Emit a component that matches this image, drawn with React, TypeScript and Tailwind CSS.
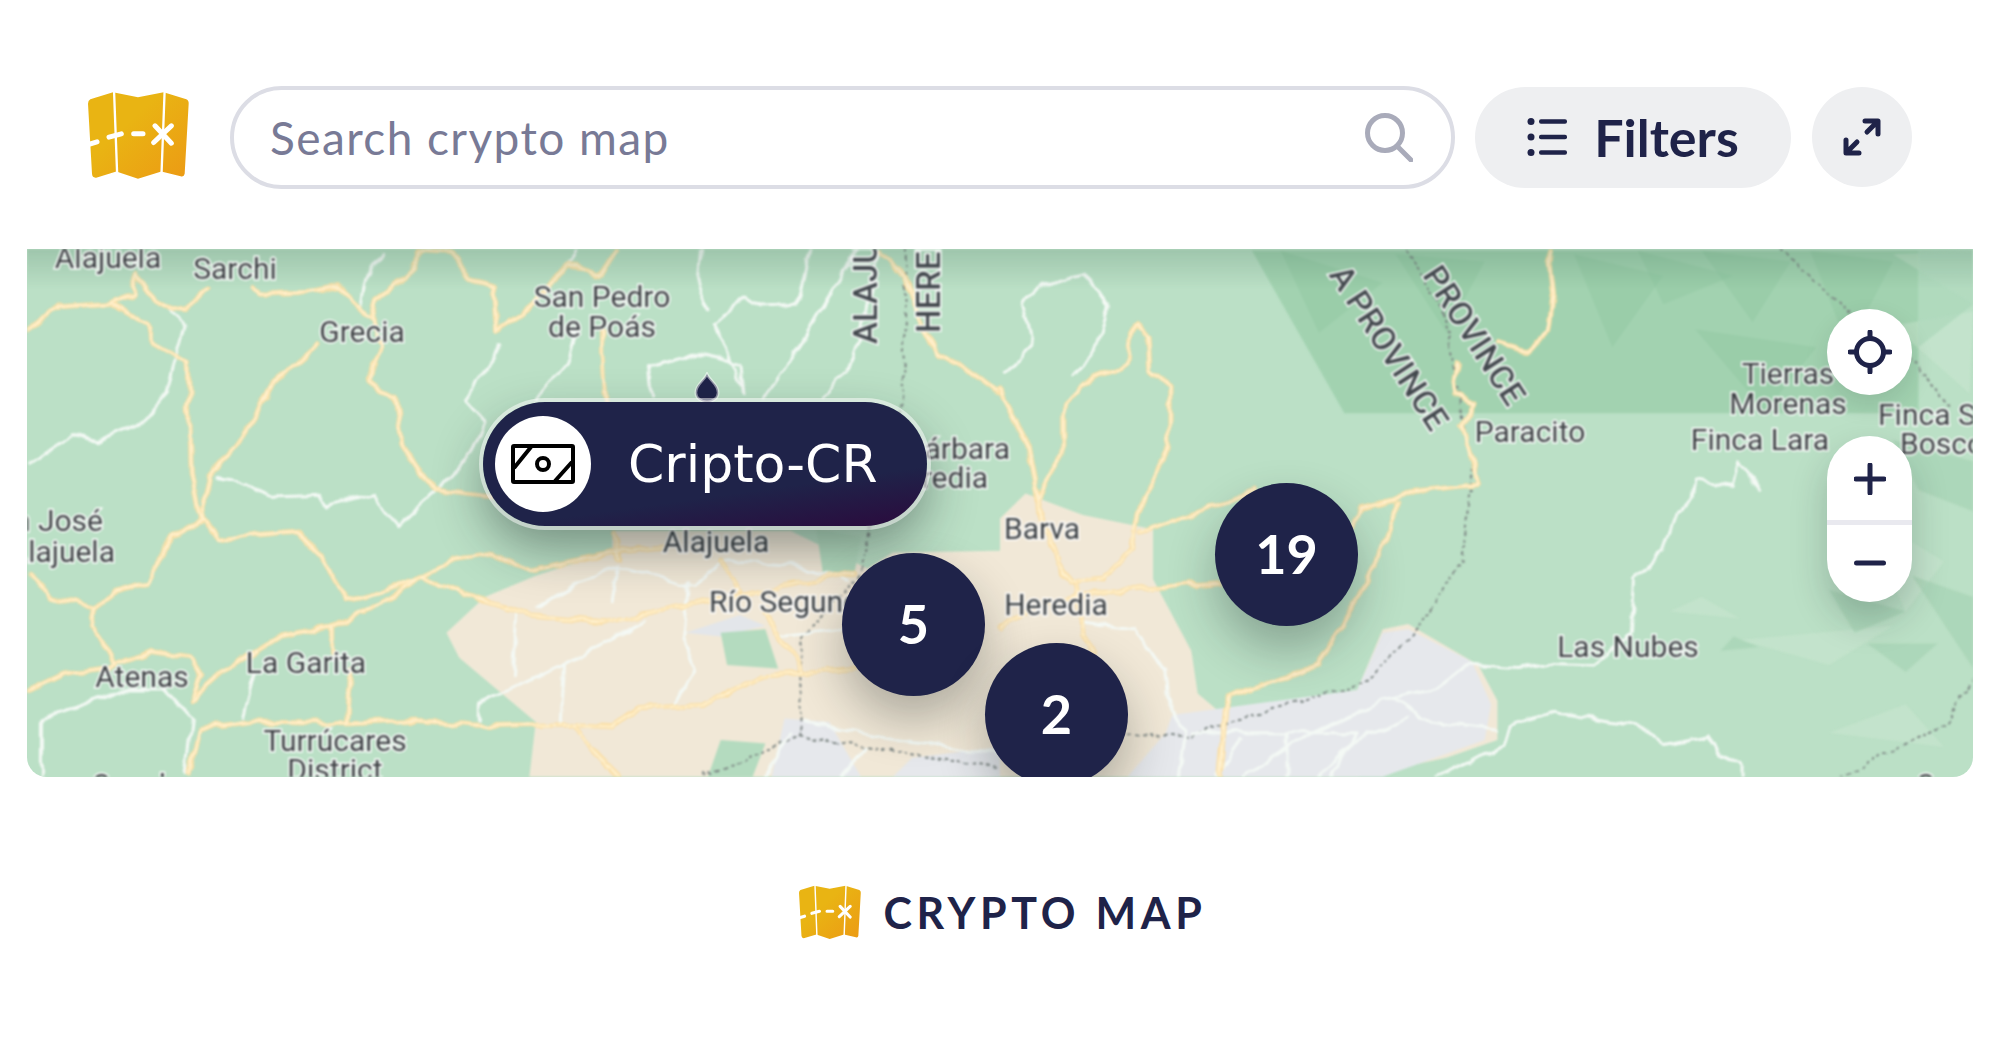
const navy = '#1f2349';

const leftYellow = [
  'M42,255 L90,185 L170,175 L230,240 L240,290 L295,345 L300,650 L315,790 L345,840 L410,825 L465,815 L500,880 L545,1010 L600,985 L660,945',
  'M170,175 L210,150 L210,90 L245,175 L290,195 L325,135',
  'M400,125 L410,155 L465,150 L530,130 L580,215 L600,300 L575,400 L620,440 L630,570 L660,650 L680,700 L770,720',
  'M500,290 L430,400 L400,490 L370,570 L330,660 L315,790 L270,830 L230,960 L180,990 L150,1030 L80,1000 L50,930',
  'M150,1030 L145,1080 L180,1190 L240,1155 L300,1170 L315,1220 L300,1290',
  'M42,1265 L100,1215 L180,1195',
  'M300,1290 L350,1210 L440,1110 L520,1080 L600,1020 L660,945 L710,895 L770,880 L830,925 L960,875 L1040,860',
  'M660,945 L760,1010 L830,1050 L950,1070 L1100,1015 L1340,930',
  'M295,1500 L315,1370 L400,1350 L550,1355 L650,1345 L760,1360 L900,1355 L960,1360 L1000,1310 L1100,1300 L1200,1220 L1340,1200',
  'M900,1355 L930,1430 L970,1500',
  'M545,1355 L550,1200',
  'M520,1085 L520,1150',
  'M660,30 L640,100 L590,170 L580,215',
  'M660,30 L710,35 L735,110 L775,130 L780,250 L830,190 L890,60 L940,100 L965,30',
  'M945,240 L945,320 L950,450',
  'M1380,30 L1420,100 L1450,250 L1470,320 L1530,380 L1568,430',
  'M1200,1040 L1215,1100 L1240,1160 L1260,1210',
  'M965,815 L970,890',
  'M1130,900 L1160,980',
];

const leftWhite = [
  'M600,40 L575,100 L565,190',
  'M900,30 L880,80',
  'M342,665 L385,680 L430,720 L500,715 L510,745 L585,710 L625,800 L680,705 L740,600 L760,510 L730,450 L770,350 L780,290',
  'M45,625 L115,545 L150,565 L220,515 L260,430 L290,240 L260,185',
  'M1020,440 L1015,360 L1100,315 L1160,350 L1165,430 L1120,230 L1170,160 L1190,185 L1250,180 L1270,30',
  'M1100,30 L1095,150 L1110,195',
  'M840,450 L890,330 L900,260',
  'M1200,440 L1260,280 L1340,30',
  'M1290,440 L1340,330 L1380,30',
  'M840,1030 L960,910 L1090,970 L1130,900 L1240,910 L1330,950',
  'M970,910 L960,1010 M1080,960 L1070,1110 L1090,1200 L1060,1300',
  'M880,1190 L750,1300 L750,1345 M880,1190 L1010,1070 M885,1190 L880,1350',
  'M810,1050 L805,1220',
  'M1225,1110 L1340,1090',
  'M1260,1350 L1400,1400 L1568,1440',
  'M1240,1380 L1200,1503 M1360,1420 L1320,1503',
  'M65,1500 L65,1340 L130,1300 L190,1260 L260,1260 L300,1340 L290,1500',
  'M380,1340 L400,1200',
];

const rightYellow = [
  'M860,30 L868,150 L860,260 L830,310 L780,290',
  'M720,345 L710,430 L745,460 L725,520 L750,685 L640,705 L600,740 L565,755 L555,800',
  'M625,735 L590,900 L500,1190 L355,1280 L345,1503',
  'M60,720 L100,600 L100,480 L130,400 L200,350 L205,260 L215,240 L232,270 L235,365 L265,410 L265,580 L215,770 L205,860 L160,950 L110,960 L90,900 L60,740 L40,560 L0,420',
  'M220,815 L300,770 L400,700',
  'M0,1080 L50,1030 L120,1000 L230,975 L345,960',
  'M120,960 L130,1100 L145,1150',
];

const rightWhite = [
  'M1190,700 L1160,620 L1150,690 L1090,675 L1085,720 L1060,770 L1040,870 L995,950 L990,1100 L930,1190 L860,1185 L810,1200 L730,1190 L680,1260 L600,1290 L480,1390 L380,1503',
  'M800,1360 L870,1320 L1000,1360 L1040,1410 L1110,1385 L1130,1440 L1165,1470 L1165,1503',
  'M800,1360 L790,1420 L680,1503',
  'M10,370 L50,300 L35,175 L70,125 L135,95 L170,185 L150,310 L115,380',
  'M130,1070 L210,1090 L240,1170 L260,1200 L265,1300 L290,1370 L280,1503',
  'M620,1290 L660,1340 L780,1370',
  'M300,1380 L560,1380 L520,1503 M450,1380 L450,1503 M380,1400 L340,1503',
  'M640,1340 L560,1400 L500,1503',
];

const rightDots = [
  'M640,30 L700,220 L740,640 L725,900 L640,1120 L570,1240 L300,1385 L200,1388',
  'M1225,30 L1330,200 L1430,340 L1490,470',
  'M1526,1230 L1480,1360 L1320,1500',
];

const leftDots = [
  'M1422,30 L1415,440 L1360,830 L1350,930 L1255,1120 L1255,1390 L1100,1503',
  'M1255,1390 L1568,1480',
];

const parkFacets = [
  'M440,30 L500,260 L600,120 Z',
  'M620,40 L700,260 L760,60 Z',
  'M900,40 L960,300 L1040,100 Z',
  'M1000,30 L1040,180 L1150,100 Z',
  'M1100,30 L1180,230 L1240,60 Z',
  'M1270,30 L1330,300 L1400,60 Z',
  'M1090,250 L1200,480 L1280,300 Z',
];

const lightFacets = [
  'M1400,240 L1520,430 L1526,200 Z',
  'M1400,40 L1526,180 L1526,30 Z',
  'M1160,1120 L1300,1190 L1400,1080 Z',
  'M1350,760 L1420,1040 L1480,900 Z',
  'M1050,1040 L1160,1060 L1100,1000 Z',
  'M1300,1380 L1420,1300 L1480,1420 Z',
];

const darkFacets = [
  'M1300,980 L1340,1100 L1420,1040 Z',
  'M1430,940 L1526,1200 L1526,1000 Z',
  'M1150,1110 L1190,1140 L1130,1150 Z',
  'M1360,1130 L1420,1210 L1470,1130 Z',
  'M1400,560 L1526,620 L1526,760 L1440,700 Z',
];

const labels = [
  { text: 'Alajuela', x: 108, y: 268 },
  { text: 'Sarchi', x: 235, y: 279 },
  { text: 'Grecia', x: 362, y: 342 },
  { text: 'San Pedro', x: 602, y: 307 },
  { text: 'de Poás', x: 602, y: 337 },
  { text: 'Santa Bárbara', x: 1010, y: 459, anchor: 'end' },
  { text: 'de Heredia', x: 988, y: 488, anchor: 'end' },
  { text: 'San José', x: 103, y: 531, anchor: 'end' },
  { text: 'de Alajuela', x: 115, y: 562, anchor: 'end' },
  { text: 'Alajuela', x: 716, y: 552 },
  { text: 'Río Segundo', x: 709, y: 612, anchor: 'start' },
  { text: 'Barva', x: 1042, y: 539 },
  { text: 'Heredia', x: 1056, y: 615 },
  { text: 'La Garita', x: 306, y: 673 },
  { text: 'Atenas', x: 142, y: 687 },
  { text: 'Turrúcares', x: 335, y: 751 },
  { text: 'District', x: 335, y: 780 },
  { text: 'Coyolar', x: 142, y: 795 },
  { text: 'Paracito', x: 1530, y: 442 },
  { text: 'Tierras', x: 1788, y: 384 },
  { text: 'Morenas', x: 1788, y: 414 },
  { text: 'Finca Lara', x: 1760, y: 450 },
  { text: 'Finca San', x: 1878, y: 425, anchor: 'start' },
  { text: 'Bosco', x: 1900, y: 454, anchor: 'start' },
  { text: 'Las Nubes', x: 1628, y: 657 },
  { text: 'San', x: 1942, y: 795 },
];

const regionLabels = [
  { text: 'ALAJUELA', transform: 'translate(877 344) rotate(-90)', anchor: 'start' },
  { text: 'HEREDIA', transform: 'translate(940 333) rotate(-90)', anchor: 'start' },
  { text: 'A PROVINCE', transform: 'translate(1431 433) rotate(57)', anchor: 'end' },
  { text: 'PROVINCE', transform: 'translate(1508 408) rotate(57)', anchor: 'end' },
];

const clusters = [
  { count: '5', pos: 'left-[815px] top-[304px]' },
  { count: '19', pos: 'left-[1188px] top-[234px]' },
  { count: '2', pos: 'left-[958px] top-[394px]' },
];

const Lines = ({ paths, className }: { paths: string[]; className: string }) => (
  <g className={className} fill="none" strokeLinejoin="round" strokeLinecap="round">
    {paths.map((d, i) => (
      <path key={i} d={d} vectorEffect="non-scaling-stroke" />
    ))}
  </g>
);

const Roads = ({ yellow, white, dots }: { yellow: string[]; white: string[]; dots: string[] }) => (
  <>
    <Lines paths={dots} className="stroke-[#7c8583] [stroke-width:2px] [stroke-dasharray:2_5]" />
    <Lines paths={white} className="stroke-[#f4f9f5] [stroke-width:3px]" />
    <Lines paths={yellow} className="stroke-[#fbdfa6] [stroke-width:5px]" />
    <Lines paths={yellow} className="stroke-[#fff1cf] [stroke-width:2px]" />
  </>
);

const MapLogo = ({ className, id }: { className: string; id: string }) => (
  <svg viewBox="55 62 303 263" className={className}>
    <defs>
      <linearGradient id={id} x1="0.35" y1="0.4" x2="1" y2="1">
        <stop offset="0" stopColor="#e9b413" />
        <stop offset="1" stopColor="#ec9a14" />
      </linearGradient>
    </defs>
    <path
      d="M62,86 L130,65 L205,80 L282,65 L350,86 Q358,90 357,100 L345,310 Q343,320 333,317 L275,303 L205,325 L140,303 L82,321 Q68,324 67,310 L55,100 Q55,90 62,86 Z"
      fill={`url(#${id})`}
    />
    <g stroke="#fff" fill="none" strokeLinecap="round">
      <path d="M133,58 L143,325 M285,58 L275,325" strokeWidth="7" strokeLinecap="butt" />
      <path d="M50,224 L82,214 M118,200 L155,190 M192,190 L220,190 M252,216 L305,166 M256,166 L305,218" strokeWidth="15" />
    </g>
  </svg>
);

const MapBackground = () => (
  <svg viewBox="27 249 1946 528" className="absolute inset-0 w-full h-full blur-[0.9px]">
    <defs>
      <linearGradient id="topShade" x1="0" y1="0" x2="0" y2="1">
        <stop offset="0" stopColor="#2f5d48" stopOpacity="0.2" />
        <stop offset="1" stopColor="#2f5d48" stopOpacity="0" />
      </linearGradient>
      <filter id="wobble" x="-2%" y="-2%" width="104%" height="104%">
        <feTurbulence type="fractalNoise" baseFrequency="0.045" numOctaves="2" seed="4" />
        <feDisplacementMap in="SourceGraphic" scale="11" xChannelSelector="R" yChannelSelector="G" />
      </filter>
    </defs>
    <g transform="translate(1000,240) scale(0.6378,0.3571)">
      <path d="M395,30 L1440,30 L1440,485 L540,485 Z" fill="#a2d2b0" />
      {parkFacets.map((d, i) => (
        <path key={i} d={d} fill="#8fc6a0" opacity="0.4" />
      ))}
      {lightFacets.map((d, i) => (
        <path key={i} d={d} fill="#cfe9d5" opacity="0.4" />
      ))}
      {darkFacets.map((d, i) => (
        <path key={i} d={d} fill="#9ccdaa" opacity="0.45" />
      ))}
      <path d="M1440,30 L1526,30 L1526,180 L1440,300 Z" fill="#a9d6b7" opacity="0.6" />
    </g>
    <g transform="translate(0,240) scale(0.6378,0.3571)">
      <path d="M700,1100 L760,1000 L840,940 L960,870 L960,815 L1240,815 L1360,920 L1400,875 L1568,870 L1568,1503 L830,1503 L840,1350 L720,1170 Z" fill="#f1e8d7" />
      <path d="M1230,1340 L1300,1350 L1350,1503 L1210,1503 Z" fill="#e6e8ec" />
      <path d="M1430,1450 L1568,1420 L1568,1503 L1400,1503 Z" fill="#e6e8ec" />
      <path d="M1075,1100 L1160,1050 L1200,1080 L1130,1110 Z" fill="#e3e6ea" />
      <path d="M1130,1100 L1200,1090 L1220,1200 L1140,1190 Z" fill="#b4dbbf" />
      <path d="M1280,810 L1350,830 L1340,930 L1290,930 Z" fill="#b4dbbf" />
      <path d="M1130,1400 L1200,1410 L1180,1503 L1110,1503 Z" fill="#b4dbbf" />
    </g>
    <g transform="translate(1000,240) scale(0.6378,0.3571)">
      <path d="M0,780 L40,710 L130,770 L240,810 L240,950 L300,1150 L310,1270 L350,1330 L560,1260 L600,1090 L640,1075 L750,1190 L780,1290 L780,1400 L700,1450 L560,1503 L0,1503 Z" fill="#f1e8d7" />
      <path d="M270,1330 L560,1260 L600,1100 L640,1090 L740,1180 L770,1300 L760,1400 L600,1503 L200,1503 L260,1380 Z" fill="#e6e8ec" />
    </g>
    <g filter="url(#wobble)">
      <g transform="translate(0,240) scale(0.6378,0.3571)">
        <Roads yellow={leftYellow} white={leftWhite} dots={leftDots} />
      </g>
      <g transform="translate(1000,240) scale(0.6378,0.3571)">
        <Roads yellow={rightYellow} white={rightWhite} dots={rightDots} />
      </g>
    </g>
    <rect x="27" y="249" width="1946" height="40" fill="url(#topShade)" />
    <g className="fill-[#3c4043] stroke-[#ffffff] [stroke-width:3px] [paint-order:stroke]" fontFamily="Roboto, sans-serif" fontSize="30">
      {labels.map((l, i) => (
        <text key={i} x={l.x} y={l.y} textAnchor={(l.anchor ?? 'middle') as 'middle' | 'start' | 'end'}>
          {l.text}
        </text>
      ))}
    </g>
    <g className="fill-[#43494e] stroke-[#ffffff] [stroke-width:3px] [paint-order:stroke]" fontFamily="Roboto, sans-serif" fontSize="33" fontWeight="500">
      {regionLabels.map((l, i) => (
        <text key={i} transform={l.transform} textAnchor={l.anchor as 'start' | 'end'}>
          {l.text}
        </text>
      ))}
    </g>
  </svg>
);

export default function App() {
  return (
    <div className="min-h-[1047px] bg-white px-[27px] pt-[27px] font-['Lato',sans-serif] text-[#1f2349]">
      <div className="rounded-[20px] overflow-hidden">
        <header className="h-[222px] bg-white flex items-center pl-[61px] pb-[2px]">
          <MapLogo id="logoTop" className="w-[101px] h-[88px] shrink-0 mb-[5px]" />
          <div className="ml-[41px] w-[1225px] h-[103px] rounded-full border-[4px] border-[#dcdde5] flex items-center pl-[36px] pr-[38px]">
            <input
              placeholder="Search crypto map"
              className="flex-1 min-w-0 bg-transparent outline-none text-[46px] tracking-[1.4px] text-[#787a96] placeholder:text-[#787a96]"
            />
            <svg viewBox="0 0 48 50" className="w-[48px] h-[50px] shrink-0" fill="none" stroke="#a9abba" strokeLinecap="round">
              <circle cx="20" cy="21" r="17.5" strokeWidth="5" />
              <path d="M33 35 L46 48" strokeWidth="5" />
            </svg>
          </div>
          <button className="ml-[20px] w-[316px] h-[101px] rounded-full bg-[#eeeff1] flex items-center justify-center gap-[27px] text-[52px] font-bold">
            <svg viewBox="0 0 40 38" className="w-[40px] h-[38px]" fill={navy}>
              <circle cx="4" cy="3.5" r="3.5" />
              <circle cx="4" cy="19" r="3.5" />
              <circle cx="4" cy="34.5" r="3.5" />
              <rect x="12" y="1.2" width="28" height="4.6" rx="2" />
              <rect x="12" y="16.7" width="28" height="4.6" rx="2" />
              <rect x="12" y="32.2" width="28" height="4.6" rx="2" />
            </svg>
            Filters
          </button>
          <button className="ml-[21px] w-[100px] h-[100px] rounded-full bg-[#eeeff1] flex items-center justify-center">
            <svg viewBox="0 0 38 38" className="w-[38px] h-[38px]" fill="none" stroke={navy} strokeWidth="5" strokeLinecap="round" strokeLinejoin="round">
              <path d="M22 3 H35 V16 M34 4 L24 14" />
              <path d="M3 22 V35 H16 M4 34 L14 24" />
            </svg>
          </button>
        </header>

        <div className="relative h-[528px] bg-[#bbe0c6] overflow-hidden rounded-b-[14px]">
          <MapBackground />

          <svg viewBox="0 0 30 32" className="absolute left-[666px] top-[123px] w-[28px] h-[32px]">
            <path d="M15 1 C18 8 27 12 27 21 C27 27 21 31 15 31 C9 31 3 27 3 21 C3 12 12 8 15 1 Z" fill={navy} stroke="#ffffff" strokeOpacity="0.5" strokeWidth="3" />
          </svg>

          <div className="absolute left-[456px] top-[153px] w-[444px] h-[124px] rounded-full bg-[linear-gradient(172deg,#1f2349_68%,#2b0a3d_100%)] ring-4 ring-white/50 shadow-[0_22px_50px_rgba(20,30,30,0.42)] flex items-center pl-[12px] text-white">
            <div className="w-[96px] h-[96px] rounded-full bg-white flex items-center justify-center shrink-0">
              <svg viewBox="0 0 64 40" className="w-[64px] h-[40px]" fill="none" stroke="#000" strokeWidth="4">
                <rect x="2" y="2" width="60" height="36" rx="1" />
                <path d="M3 24 L20 3 M44 37 L61 18" />
                <circle cx="32" cy="20" r="6" />
              </svg>
            </div>
            <span className="ml-[37px] text-[52px] font-['DejaVu_Sans',sans-serif] leading-none">Cripto-CR</span>
          </div>

          {clusters.map((c) => (
            <div
              key={c.count}
              className={`absolute ${c.pos} w-[143px] h-[143px] rounded-full bg-[#1f2349] text-white text-[54px] font-bold flex items-center justify-center pb-[3px] shadow-[0_24px_48px_rgba(20,30,30,0.3)]`}
            >
              {c.count}
            </div>
          ))}

          <button className="absolute right-[61px] top-[60px] w-[85px] h-[86px] rounded-full bg-white flex items-center justify-center shadow-[0_10px_24px_rgba(20,30,30,0.12)]">
            <svg viewBox="0 0 44 44" className="w-[44px] h-[44px]" fill="none" stroke={navy} strokeWidth="5" strokeLinecap="round">
              <circle cx="22" cy="22" r="13.5" />
              <path d="M22 2 V8 M22 36 V42 M2 22 H8 M36 22 H42" />
            </svg>
          </button>

          <div className="absolute right-[61px] top-[187px] w-[85px] h-[166px] rounded-full bg-white flex flex-col overflow-hidden shadow-[0_18px_36px_rgba(20,30,30,0.22)]">
            <div className="h-[82px] pt-[2px] flex items-center justify-center border-b-[5px] border-[#e9e9ef] box-content">
              <svg viewBox="0 0 32 32" className="w-[32px] h-[32px]" stroke={navy} strokeWidth="5" strokeLinecap="round">
                <path d="M16 2 V30 M2 16 H30" />
              </svg>
            </div>
            <div className="flex-1 pb-[2px] flex items-center justify-center">
              <svg viewBox="0 0 32 8" className="w-[32px] h-[8px]" stroke={navy} strokeWidth="5" strokeLinecap="round">
                <path d="M2.5 4 H29.5" />
              </svg>
            </div>
          </div>
        </div>
      </div>

      <footer className="mt-[108px] flex items-center justify-center gap-[22px] pl-[6px]">
        <MapLogo id="logoFoot" className="w-[62px] h-[54px] shrink-0" />
        <span className="text-[43px] font-bold tracking-[4.7px] leading-none">CRYPTO MAP</span>
      </footer>
    </div>
  );
}
